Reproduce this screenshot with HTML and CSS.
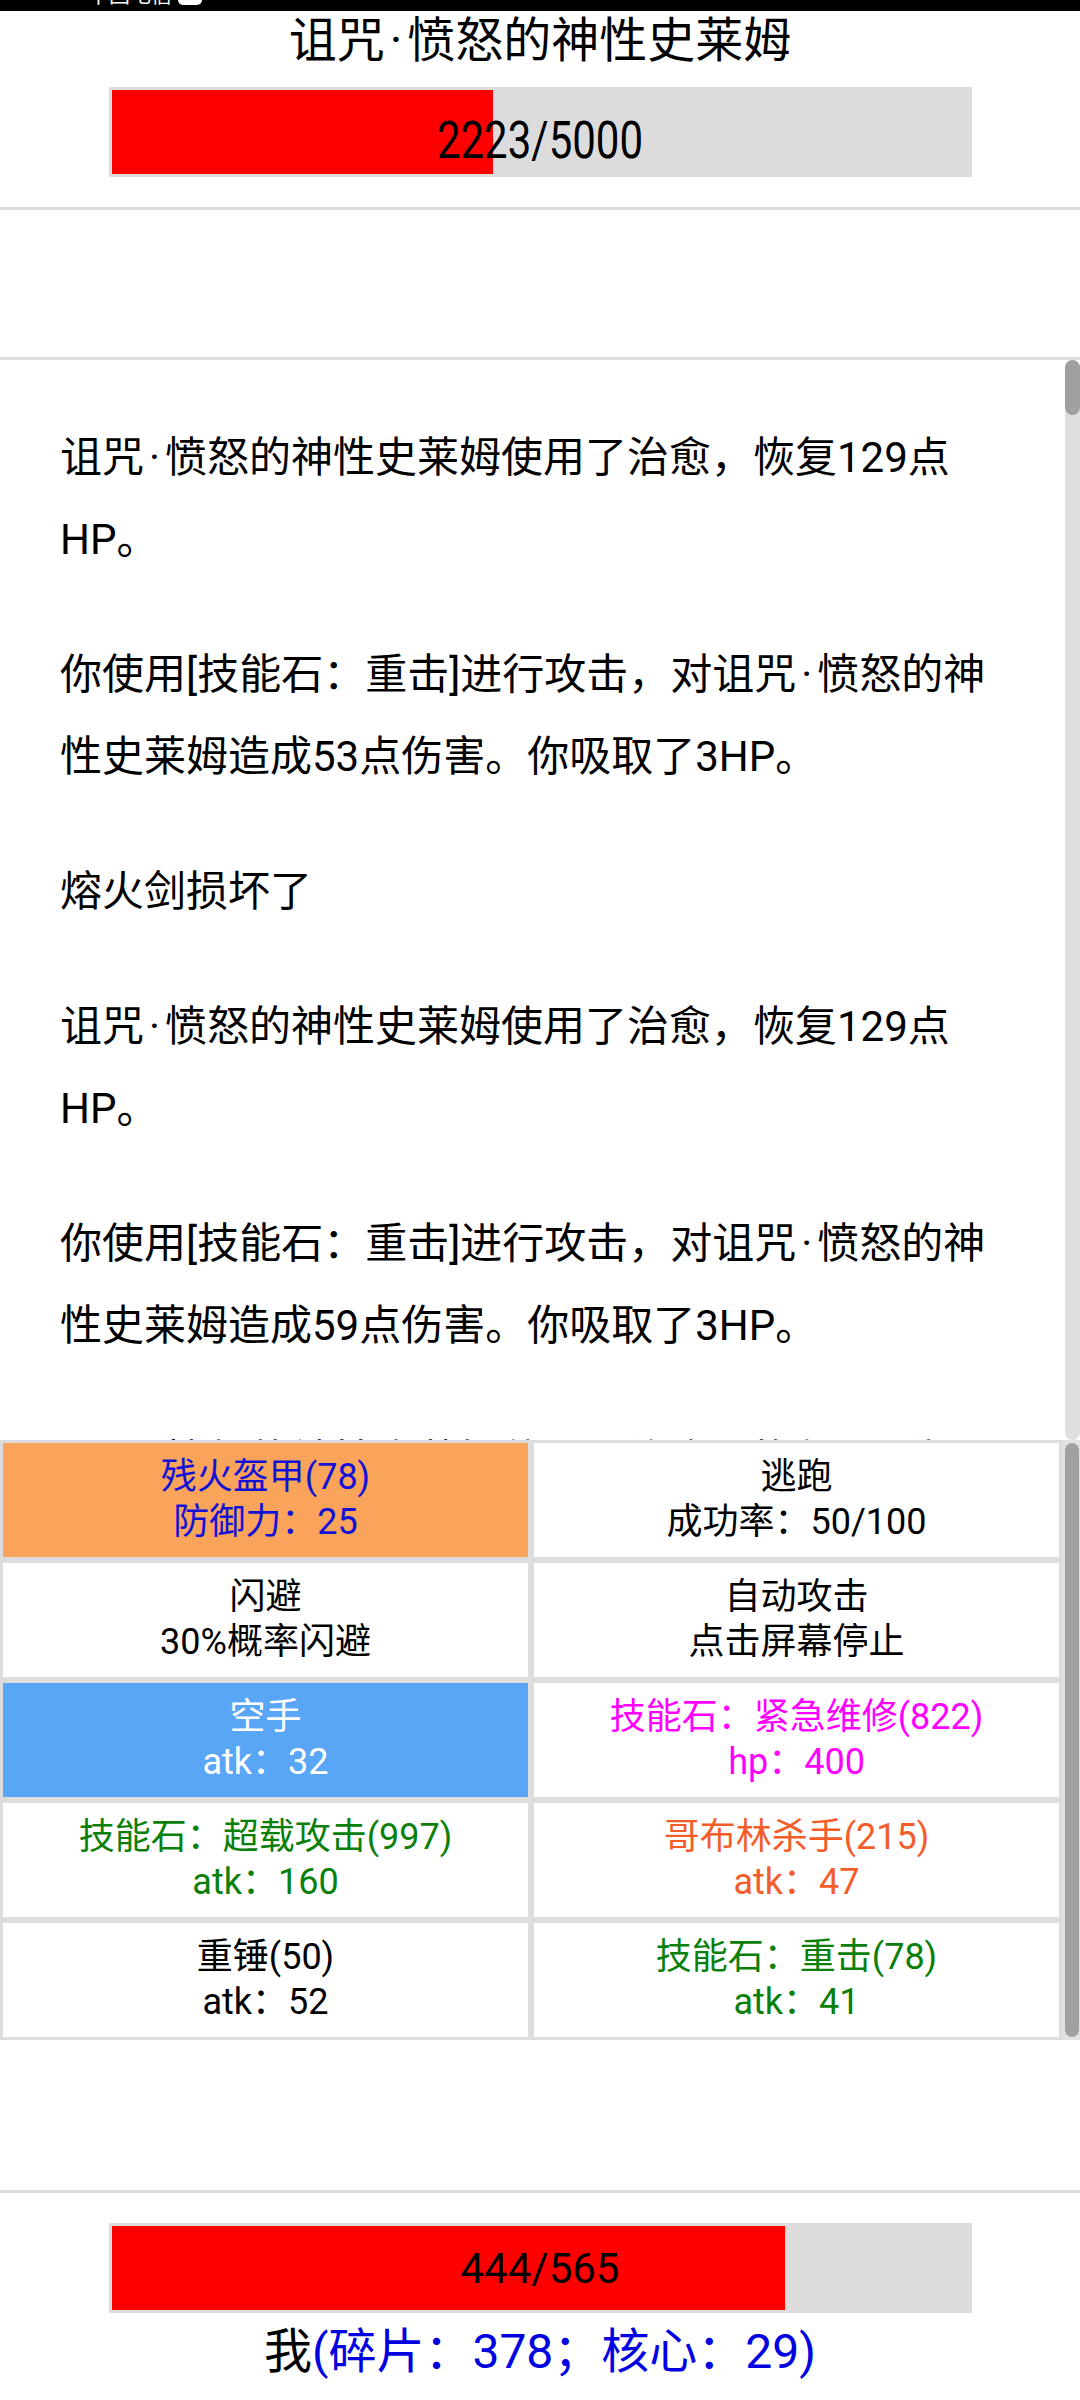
FILE: index.html
```html
<!DOCTYPE html>
<html lang="zh-CN">
<head>
  <meta charset="UTF-8">
  <title>战斗</title>
  <link rel="stylesheet" href="styles.css">
</head>
<body>

  <div class="statusbar">
    <span class="carrier">中国电信</span>
    <span class="batt"></span>
  </div>

  <header class="enemy">
    <h1>诅咒<span class="dot">·</span>愤怒的神性史莱姆</h1>
    <div class="hpbar">
      <div class="fill" style="width: 44.46%"></div>
      <div class="hptext"><span>2223/5000</span></div>
    </div>
  </header>

  <div class="notice"></div>

  <div class="battle">
    <div class="log">
      <p>诅咒<span class="dot">·</span>愤怒的神性史莱姆使用了治愈，恢复129点HP。</p>
      <p>你使用[技能石：重击]进行攻击，对诅咒<span class="dot">·</span>愤怒的神性史莱姆造成53点伤害。你吸取了3HP。</p>
      <p>熔火剑损坏了</p>
      <p>诅咒<span class="dot">·</span>愤怒的神性史莱姆使用了治愈，恢复129点HP。</p>
      <p>你使用[技能石：重击]进行攻击，对诅咒<span class="dot">·</span>愤怒的神性史莱姆造成59点伤害。你吸取了3HP。</p>
      <p>诅咒<span class="dot">·</span>愤怒的神性史莱姆使用了治愈，恢复129点HP。</p>
    </div>
    <div class="scroll"><div class="thumb"></div></div>
  </div>

  <div class="actions">
    <div class="grid">
      <div class="cell armor">
        <div>残火盔甲(78)</div>
        <div>防御力：25</div>
      </div>
      <div class="cell">
        <div>逃跑</div>
        <div>成功率：50/100</div>
      </div>
      <div class="cell">
        <div>闪避</div>
        <div>30%概率闪避</div>
      </div>
      <div class="cell">
        <div>自动攻击</div>
        <div>点击屏幕停止</div>
      </div>
      <div class="cell weapon">
        <div>空手</div>
        <div>atk：32</div>
      </div>
      <div class="cell pink">
        <div>技能石：紧急维修(822)</div>
        <div>hp：400</div>
      </div>
      <div class="cell green">
        <div>技能石：超载攻击(997)</div>
        <div>atk：160</div>
      </div>
      <div class="cell orange">
        <div>哥布林杀手(215)</div>
        <div>atk：47</div>
      </div>
      <div class="cell">
        <div>重锤(50)</div>
        <div>atk：52</div>
      </div>
      <div class="cell green">
        <div>技能石：重击(78)</div>
        <div>atk：41</div>
      </div>
    </div>
    <div class="scroll"><div class="thumb"></div></div>
  </div>

  <div class="spacer"></div>

  <footer class="player">
    <div class="hpbar">
      <div class="fill" style="width: 78.58%"></div>
      <div class="hptext">444/565</div>
    </div>
    <div class="me">我<span class="stats">(碎片：378；核心：29)</span></div>
  </footer>

</body>
</html>
```

FILE: styles.css
```css
* {
  box-sizing: border-box;
}

body {
  margin: 0;
  width: 1080px;
  height: 2400px;
  overflow: hidden;
  background: #fff;
  color: #000;
  font-family: Roboto, "Noto Sans CJK SC", sans-serif;
}

.dot {
  padding: 0 5px;
}

/* phone status bar, mostly cut off */
.statusbar {
  height: 11px;
  background: #000;
  color: #fff;
  display: flex;
  align-items: flex-end;
  gap: 6px;
  padding-left: 88px;
  overflow: hidden;
}

.carrier {
  font-size: 21px;
  line-height: 26px;
  margin-bottom: 3px;
}

.batt {
  width: 24px;
  height: 20px;
  border-radius: 5px;
  background: #fff;
  margin-bottom: 6px;
}

/* enemy header */
.enemy {
  padding: 0 0 30px;
  border-bottom: 3px solid #ddd;
  text-align: center;
}

.enemy h1 {
  margin: 0;
  height: 60px;
  font-size: 48px;
  line-height: 60px;
  font-weight: normal;
}

.hpbar {
  width: 863px;
  height: 90px;
  margin: 16px auto 0;
  padding: 3px;
  background: #dcdcdc;
  display: grid;
}

.hpbar > div {
  grid-area: 1 / 1;
}

.fill {
  height: 100%;
  background: #f00;
}

.hptext {
  justify-self: center;
  align-self: center;
  font-size: 42px;
}

.enemy .hptext {
  padding-top: 16px;
}

.enemy .hptext span {
  display: inline-block;
  transform: scaleY(1.22);
}

.notice {
  height: 150px;
  border-bottom: 3px solid #ddd;
}

/* battle log */
.battle {
  display: flex;
  height: 1080px;
}

.log {
  flex: 1;
  overflow: hidden;
  padding: 57px 65px 0 60px;
  font-size: 42px;
  line-height: 82px;
}

.log p {
  margin: 0 0 53px;
}

.scroll {
  width: 15px;
  background: #dedede;
  border-radius: 8px;
  display: flex;
  flex-direction: column;
}

.thumb {
  height: 55px;
  background: #a0a0a0;
  border-radius: 8px;
}

/* action buttons */
.actions {
  display: flex;
  height: 600px;
}

.grid {
  flex: 1;
  display: grid;
  grid-template-columns: 1fr 1fr;
  grid-auto-rows: 120px;
}

.cell {
  border: 3px solid #ddd;
  display: flex;
  flex-direction: column;
  justify-content: center;
  align-items: center;
  text-align: center;
  font-size: 36px;
  line-height: 45px;
  background: #fff;
}

.armor  { background: #f9a35b; color: #1212d6; }
.weapon { background: #5aa6f6; color: #fff; }
.pink   { color: #f0f; }
.green  { color: #0a800a; }
.orange { color: #f25d2a; }

.actions .scroll {
  width: 18px;
  padding: 3px 1px 3px 3px;
  border-radius: 0;
  background: #e2e2e2;
}

.actions .thumb {
  flex: 1;
}

.spacer {
  height: 150px;
}

/* player footer */
.player {
  border-top: 3px solid #ddd;
  padding-top: 30px;
  text-align: center;
}

.player .hpbar {
  margin-top: 0;
}

.me {
  margin-top: 9px;
  font-size: 48px;
  line-height: 60px;
}

.stats {
  color: #0000e0;
}
```
